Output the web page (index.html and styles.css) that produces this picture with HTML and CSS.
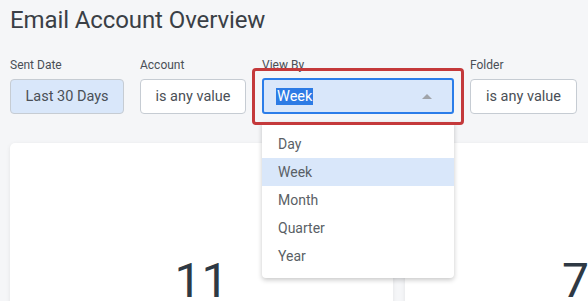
FILE: index.html
```html
<!DOCTYPE html>
<html lang="en">
<head>
  <meta charset="UTF-8">
  <meta name="viewport" content="width=device-width, initial-scale=1.0">
  <title>Email Account Overview</title>
  <link rel="stylesheet" href="styles.css">
</head>
<body>
  <!-- Header -->
  <div class="header">
    <h1 class="title">Email Account Overview</h1>

    <div class="filters">
      <div class="filter">
        <span class="filter-label">Sent Date</span>
        <div class="filter-btn active">Last 30 Days</div>
      </div>
      <div class="filter">
        <span class="filter-label">Account</span>
        <div class="filter-btn">is any value</div>
      </div>
      <div class="filter">
        <span class="filter-label">View By</span>
        <div class="select-wrap">
          <div class="select">
            <span class="select-value">Week</span>
            <span class="caret"></span>
          </div>
          <!-- Dropdown -->
          <ul class="menu">
            <li class="menu-item">Day</li>
            <li class="menu-item selected">Week</li>
            <li class="menu-item">Month</li>
            <li class="menu-item">Quarter</li>
            <li class="menu-item">Year</li>
          </ul>
        </div>
      </div>
      <div class="filter">
        <span class="filter-label">Folder</span>
        <div class="filter-btn">is any value</div>
      </div>
    </div>
  </div>

  <!-- Tiles -->
  <div class="tiles">
    <div class="tile">
      <div class="tile-value">11</div>
    </div>
    <div class="tile">
      <div class="tile-value">786</div>
    </div>
  </div>
</body>
</html>
```

FILE: styles.css
```css
* {
  margin: 0;
  padding: 0;
  box-sizing: border-box;
}

body {
  font-family: Roboto, "Liberation Sans", Arial, sans-serif;
  background-color: #f5f6f8;
  color: #3c4148;
  width: 588px;
  height: 301px;
  overflow: hidden;
}

.header {
  padding: 4px 10px 0;
}

.title {
  font-size: 24px;
  font-weight: 400;
  line-height: 32px;
  color: #3a3f46;
  letter-spacing: -0.1px;
}

.filters {
  display: flex;
  gap: 16px;
  margin-top: 22px;
}

.filter {
  display: flex;
  flex-direction: column;
}

.filter-label {
  font-size: 12px;
  line-height: 14px;
  color: #4a4f56;
  margin-bottom: 7px;
}

.filter-btn {
  height: 35px;
  padding: 0 16px;
  border: 1px solid #c6ccd3;
  border-radius: 4px;
  background: #fff;
  font-size: 14.5px;
  line-height: 33px;
  color: #4a4f56;
  text-align: center;
}

.filter-btn.active {
  background: #d9e7fa;
  width: 114px;
  padding: 0;
}

.filter:nth-child(2) .filter-btn {
  width: 106px;
  padding: 0;
}

.filter:nth-child(4) .filter-btn {
  width: 107px;
  padding: 0;
}

.select-wrap {
  position: relative;
  width: 192px;
  margin-top: -1px;
}

/* red highlight frame */
.select-wrap::after {
  content: "";
  position: absolute;
  top: -10px;
  left: -10px;
  right: -10px;
  bottom: -11px;
  border: 3px solid #c4393b;
  border-radius: 4px;
  z-index: 3;
}

.select {
  height: 36px;
  border: 2px solid #2b7de9;
  border-radius: 3px;
  background: #d9e7fa;
  display: flex;
  align-items: center;
  justify-content: space-between;
  padding: 0 20px 0 12px;
}

.select-value {
  background: #2c7be5;
  color: #fff;
  font-size: 14.5px;
  line-height: 17px;
  padding: 0 1px;
}

.caret {
  width: 0;
  height: 0;
  border-left: 5px solid transparent;
  border-right: 5px solid transparent;
  border-bottom: 5px solid #a0a4a9;
}

.menu {
  list-style: none;
  position: absolute;
  top: 44px;
  left: 0;
  width: 192px;
  padding: 8px 0 8px;
  background: #fff;
  border-radius: 0 0 4px 4px;
  box-shadow: 0 2px 5px rgba(0, 0, 0, 0.22);
  z-index: 2;
}

.menu-item {
  height: 28px;
  line-height: 28px;
  padding-left: 16px;
  font-size: 14px;
  color: #5a5f66;
}

.menu-item.selected {
  background: #d9e7fa;
}

.tiles {
  display: grid;
  grid-template-columns: 383px 395px;
  gap: 12px;
  padding: 29px 10px 0;
}

.tile {
  background: #fff;
  border-radius: 5px;
  box-shadow: 0 1px 4px rgba(0, 0, 0, 0.08);
  height: 200px;
  padding-top: 110px;
  text-align: center;
}

.tile-value {
  font-size: 48px;
  line-height: 56px;
  color: #2e3944;
}
```
